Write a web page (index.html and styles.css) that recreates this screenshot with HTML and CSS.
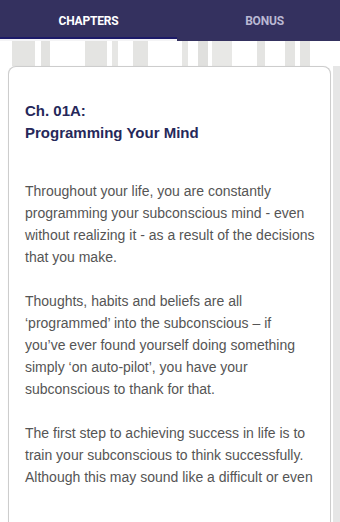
FILE: index.html
```html
<!DOCTYPE html>
<html lang="en">
<head>
  <meta charset="UTF-8" />
  <meta name="viewport" content="width=device-width, initial-scale=1.0" />
  <title>Chapters</title>
  <link rel="stylesheet" href="styles.css">
</head>
<body>
  <div class="tabs">
    <div class="tab active">CHAPTERS</div>
    <div class="tab">BONUS</div>
  </div>

  <div class="page">
    <div class="card">
      <h2>Ch. 01A:<br>Programming Your Mind</h2>
      <p>Throughout your life, you are constantly programming your subconscious mind - even without realizing it - as a result of the decisions that you make.</p>
      <p>Thoughts, habits and beliefs are all &lsquo;programmed&rsquo; into the subconscious &ndash; if you&rsquo;ve ever found yourself doing something simply &lsquo;on auto-pilot&rsquo;, you have your subconscious to thank for that.</p>
      <p>The first step to achieving success in life is to train your subconscious to think successfully. Although this may sound like a difficult or even</p>
    </div>
    <div class="scroll"></div>
  </div>
</body>
</html>
```

FILE: styles.css
```css
body {
  margin: 0;
  width: 340px;
  height: 522px;
  overflow: hidden;
  font-family: "Liberation Sans", Arial, sans-serif;
  background: #fff;
}
.tabs {
  display: flex;
  height: 41px;
  background-color: #34315f;
}
.tab {
  display: flex;
  align-items: center;
  justify-content: center;
  font-family: Roboto, "Liberation Sans", sans-serif;
  font-weight: 700;
  font-size: 12px;
  letter-spacing: -0.2px;
  color: #b9b8d2;
}
.tab.active {
  width: 177px;
  color: #fff;
  box-shadow: inset 0 -2px 0 #f4f4f6, inset 0 -4px 0 #1c1a68;
}
.tab:last-child {
  flex: 1;
  padding-left: 12px;
}
.page {
  display: flex;
  padding-top: 25px;
  height: 456px;
  background:
    linear-gradient(to right,
      transparent 12px, #e4e4e2 12px, #e4e4e2 35px, transparent 35px,
      transparent 41px, #e2e2e0 41px, #e2e2e0 50px, transparent 50px,
      transparent 85px, #e4e4e2 85px, #e4e4e2 107px, transparent 107px,
      transparent 112px, #e6e6e4 112px, #e6e6e4 118px, transparent 118px,
      transparent 133px, #e4e4e2 133px, #e4e4e2 148px, transparent 148px,
      transparent 182px, #e6e6e4 182px, #e6e6e4 188px, transparent 188px,
      transparent 198px, #e0e0de 198px, #e0e0de 208px, transparent 208px,
      transparent 212px, #e8e8e6 212px, #e8e8e6 232px, transparent 232px,
      transparent 257px, #e4e4e2 257px, #e4e4e2 265px, transparent 265px,
      transparent 285px, #e4e4e2 285px, #e4e4e2 295px, transparent 295px,
      transparent 300px, #e4e4e2 300px, #e4e4e2 310px, transparent 310px
    ) top / 100% 25px no-repeat,
    #fff;
}
.card {
  margin-left: 8px;
  width: 290px;
  padding: 33px 15px 0 16px;
  border: 1px solid #cdcdcd;
  border-bottom: none;
  border-radius: 8px 8px 0 0;
  background: #fff;
  box-shadow: 0 0 1px rgba(0,0,0,0.1);
}
.card h2 {
  margin: 0 0 36px 0;
  font-size: 15px;
  line-height: 22px;
  font-weight: 700;
  color: #26285a;
}
.card p {
  margin: 0 0 22px 0;
  font-size: 14px;
  line-height: 22px;
  color: #555;
}
.scroll {
  margin-left: auto;
  width: 7px;
  background-color: #e6e6e6;
}
```
